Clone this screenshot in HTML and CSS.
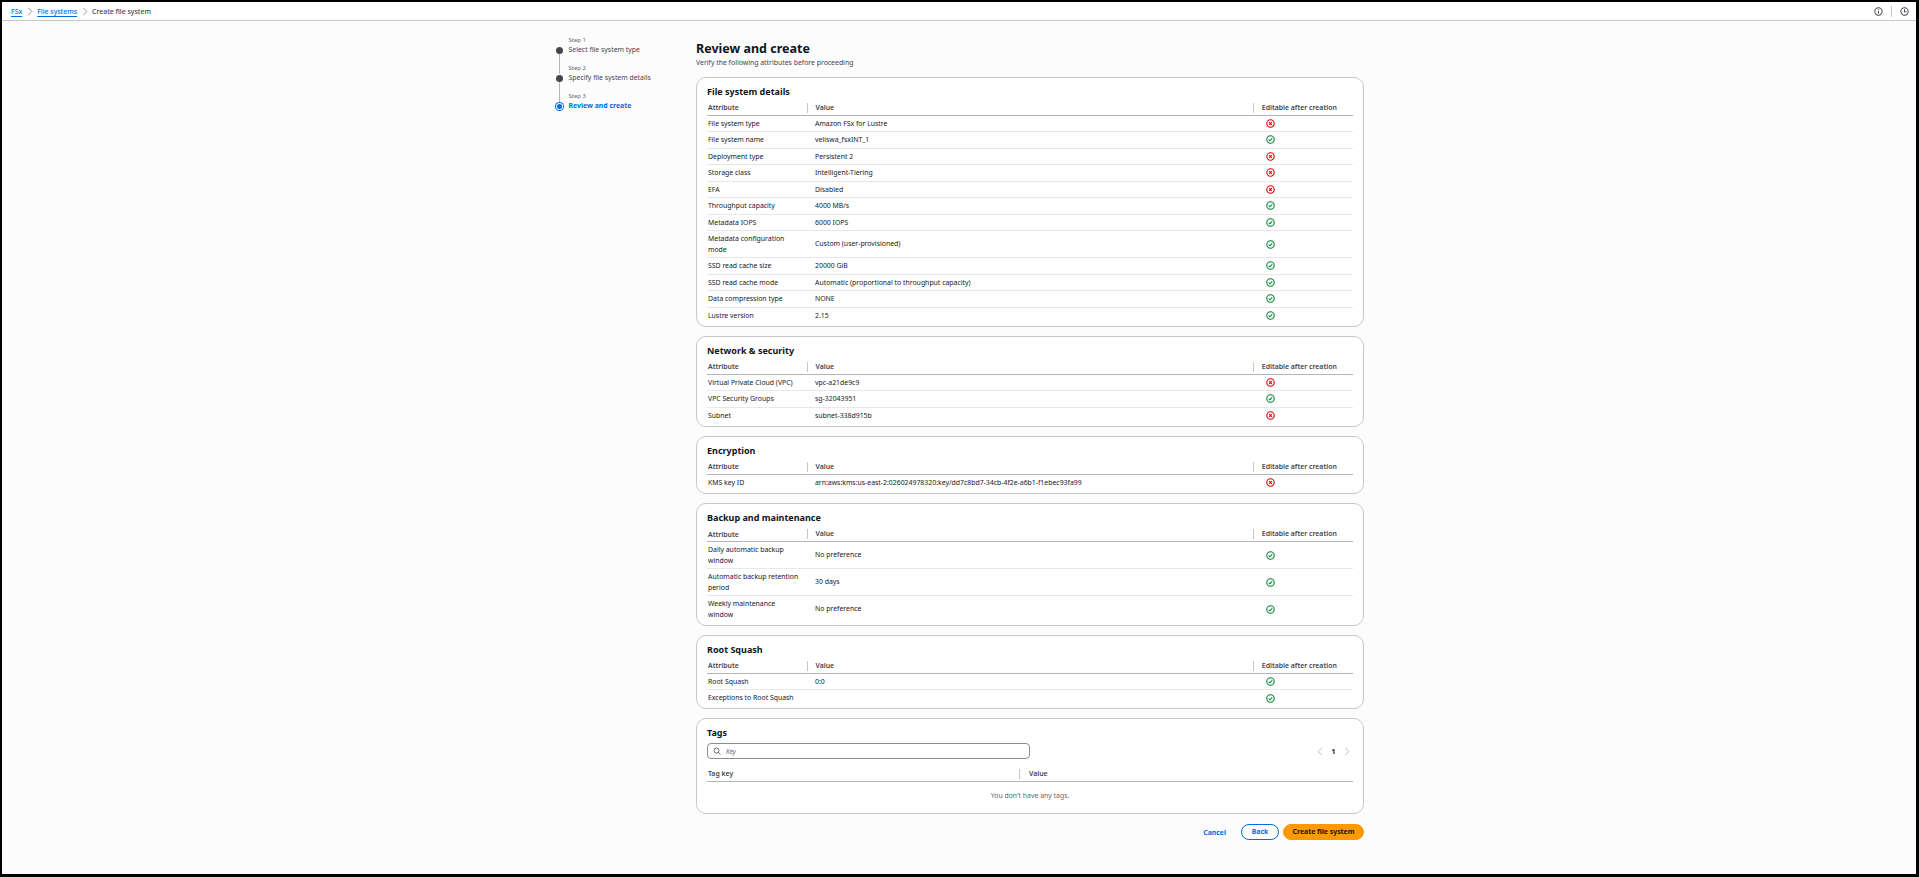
FILE: index.html
```html
<!DOCTYPE html>
<html lang="en">
<head>
<meta charset="utf-8">
<title>Create file system</title>
<link rel="stylesheet" href="styles.css">
</head>
<body>
<svg class="defs" width="0" height="0" aria-hidden="true">
  <symbol id="no" viewBox="0 0 16 16"><circle cx="8" cy="8" r="6.6" fill="none" stroke="#db0000" stroke-width="2"/><path d="M5.7 5.7l4.6 4.6M10.3 5.7l-4.6 4.6" fill="none" stroke="#db0000" stroke-width="2"/></symbol>
  <symbol id="yes" viewBox="0 0 16 16"><circle cx="8" cy="8" r="6.6" fill="none" stroke="#00802f" stroke-width="1.9"/><path d="M4.8 8.2l2.2 2.2 4.2-4.6" fill="none" stroke="#00802f" stroke-width="1.9"/></symbol>
</svg>
<div class="frame">
  <header class="crumbs">
    <nav class="trail">
      <a class="crumb">FSx</a>
      <svg class="sep" viewBox="0 0 8 12"><path d="M1.5 1l5 5-5 5" fill="none" stroke="#8c8c94" stroke-width="1.2"/></svg>
      <a class="crumb">File systems</a>
      <svg class="sep" viewBox="0 0 8 12"><path d="M1.5 1l5 5-5 5" fill="none" stroke="#8c8c94" stroke-width="1.2"/></svg>
      <span class="here">Create file system</span>
    </nav>
    <div class="tools">
      <svg class="tool" viewBox="0 0 16 16"><circle cx="8" cy="8" r="6.5" fill="none" stroke="#424650" stroke-width="1.8"/><path d="M8 7v4.5M8 4.2v1.6" stroke="#424650" stroke-width="1.8"/></svg>
      <span class="rule"></span>
      <svg class="tool" viewBox="0 0 16 16"><circle cx="8" cy="8" r="6.5" fill="none" stroke="#424650" stroke-width="1.8"/><path d="M8 4v4.4h3.4" fill="none" stroke="#424650" stroke-width="1.8"/></svg>
    </div>
  </header>
  <div class="layout">
    <aside class="steps">
      <ol class="steplist">
        <li class="step">
          <small class="steplabel">Step 1</small>
          <div class="stepline"><span class="dot"></span><span class="stepname">Select file system type</span></div>
        </li>
        <li class="step">
          <small class="steplabel">Step 2</small>
          <div class="stepline"><span class="dot"></span><span class="stepname">Specify file system details</span></div>
        </li>
        <li class="step last">
          <small class="steplabel">Step 3</small>
          <div class="stepline"><span class="dot active"></span><span class="stepname current">Review and create</span></div>
        </li>
      </ol>
    </aside>
    <main class="content">
      <h1 class="title">Review and create</h1>
      <p class="sub">Verify the following attributes before proceeding</p>

      <section class="card">
        <h2 class="cardtitle">File system details</h2>
        <table class="attrs">
          <thead><tr><th>Attribute</th><th><span class="th-sep">Value</span></th><th><span class="th-sep">Editable after creation</span></th></tr></thead>
          <tbody>
            <tr><td>File system type</td><td>Amazon FSx for Lustre</td><td><svg class="st"><use href="#no"/></svg></td></tr>
            <tr><td>File system name</td><td>veliswa_fsxINT_1</td><td><svg class="st"><use href="#yes"/></svg></td></tr>
            <tr><td>Deployment type</td><td>Persistent 2</td><td><svg class="st"><use href="#no"/></svg></td></tr>
            <tr><td>Storage class</td><td>Intelligent-Tiering</td><td><svg class="st"><use href="#no"/></svg></td></tr>
            <tr><td>EFA</td><td>Disabled</td><td><svg class="st"><use href="#no"/></svg></td></tr>
            <tr><td>Throughput capacity</td><td>4000 MB/s</td><td><svg class="st"><use href="#yes"/></svg></td></tr>
            <tr><td>Metadata IOPS</td><td>6000 IOPS</td><td><svg class="st"><use href="#yes"/></svg></td></tr>
            <tr><td>Metadata configuration mode</td><td>Custom (user-provisioned)</td><td><svg class="st"><use href="#yes"/></svg></td></tr>
            <tr><td>SSD read cache size</td><td>20000 GiB</td><td><svg class="st"><use href="#yes"/></svg></td></tr>
            <tr><td>SSD read cache mode</td><td>Automatic (proportional to throughput capacity)</td><td><svg class="st"><use href="#yes"/></svg></td></tr>
            <tr><td>Data compression type</td><td>NONE</td><td><svg class="st"><use href="#yes"/></svg></td></tr>
            <tr><td>Lustre version</td><td>2.15</td><td><svg class="st"><use href="#yes"/></svg></td></tr>
          </tbody>
        </table>
      </section>

      <section class="card">
        <h2 class="cardtitle">Network &amp; security</h2>
        <table class="attrs">
          <thead><tr><th>Attribute</th><th><span class="th-sep">Value</span></th><th><span class="th-sep">Editable after creation</span></th></tr></thead>
          <tbody>
            <tr><td>Virtual Private Cloud (VPC)</td><td>vpc-a21de9c9</td><td><svg class="st"><use href="#no"/></svg></td></tr>
            <tr><td>VPC Security Groups</td><td>sg-32043951</td><td><svg class="st"><use href="#yes"/></svg></td></tr>
            <tr><td>Subnet</td><td>subnet-338d915b</td><td><svg class="st"><use href="#no"/></svg></td></tr>
          </tbody>
        </table>
      </section>

      <section class="card">
        <h2 class="cardtitle">Encryption</h2>
        <table class="attrs">
          <thead><tr><th>Attribute</th><th><span class="th-sep">Value</span></th><th><span class="th-sep">Editable after creation</span></th></tr></thead>
          <tbody>
            <tr><td>KMS key ID</td><td>arn:aws:kms:us-east-2:026024978320:key/dd7c8bd7-34cb-4f2e-a6b1-f1ebec93fa99</td><td><svg class="st"><use href="#no"/></svg></td></tr>
          </tbody>
        </table>
      </section>

      <section class="card">
        <h2 class="cardtitle">Backup and maintenance</h2>
        <table class="attrs">
          <thead><tr><th>Attribute</th><th><span class="th-sep">Value</span></th><th><span class="th-sep">Editable after creation</span></th></tr></thead>
          <tbody>
            <tr><td>Daily automatic backup window</td><td>No preference</td><td><svg class="st"><use href="#yes"/></svg></td></tr>
            <tr><td>Automatic backup retention period</td><td>30 days</td><td><svg class="st"><use href="#yes"/></svg></td></tr>
            <tr><td>Weekly maintenance window</td><td>No preference</td><td><svg class="st"><use href="#yes"/></svg></td></tr>
          </tbody>
        </table>
      </section>

      <section class="card">
        <h2 class="cardtitle">Root Squash</h2>
        <table class="attrs">
          <thead><tr><th>Attribute</th><th><span class="th-sep">Value</span></th><th><span class="th-sep">Editable after creation</span></th></tr></thead>
          <tbody>
            <tr><td>Root Squash</td><td>0:0</td><td><svg class="st"><use href="#yes"/></svg></td></tr>
            <tr><td>Exceptions to Root Squash</td><td></td><td><svg class="st"><use href="#yes"/></svg></td></tr>
          </tbody>
        </table>
      </section>

      <section class="card tags">
        <h2 class="cardtitle tagstitle">Tags</h2>
        <div class="filterbar">
          <label class="search">
            <svg class="searchicon" viewBox="0 0 16 16"><circle cx="7" cy="7" r="5" fill="none" stroke="#424650" stroke-width="1.6"/><path d="M10.6 10.6L15 15" stroke="#424650" stroke-width="1.6"/></svg>
            <span class="placeholder">Key</span>
          </label>
          <div class="pager">
            <svg class="pagearrow" viewBox="0 0 8 12"><path d="M6.5 1l-5 5 5 5" fill="none" stroke="#b4b4bb" stroke-width="1.2"/></svg>
            <span class="pagenum">1</span>
            <svg class="pagearrow" viewBox="0 0 8 12"><path d="M1.5 1l5 5-5 5" fill="none" stroke="#b4b4bb" stroke-width="1.2"/></svg>
          </div>
        </div>
        <div class="taghead"><span class="tagkey">Tag key</span><span class="tagval">Value</span></div>
        <p class="empty">You don't have any tags.</p>
      </section>

      <footer class="actions">
        <a class="cancel">Cancel</a>
        <button class="btn back">Back</button>
        <button class="btn primary">Create file system</button>
      </footer>
    </main>
  </div>
</div>
</body>
</html>
```
FILE: styles.css
```css
* { box-sizing: border-box; }
html, body { margin: 0; height: 100%; }
body {
  background: #000;
  padding: 2px 3px 3px 2px;
  font-family: "Noto Sans", "Open Sans", sans-serif;
  font-size: 6.9px;
  color: #0f141a;
  overflow: hidden;
}
.defs { position: absolute; }
.frame { height: 100%; background: #fcfcfd; overflow: hidden; }
.crumbs {
  height: 19px;
  border-bottom: 1px solid #c6c6cd;
  background: #fff;
  display: flex;
  align-items: center;
  justify-content: space-between;
  padding: 0 7px 0 9px;
}
.trail { display: flex; align-items: center; gap: 4.5px; }
.crumb { color: #006ce0; text-decoration: underline; text-underline-offset: 1.5px; font-weight: 500; }
.here { color: #424650; font-weight: 500; }
.sep { width: 6px; height: 9px; }
.tools { display: flex; align-items: center; gap: 8px; }
.tool { width: 9px; height: 9px; }
.rule { width: 1px; height: 11px; background: #c6c6cd; }
.layout { display: flex; padding-left: 554px; }
.steps { width: 140px; padding-top: 14px; }
.steplist { list-style: none; margin: 0; padding: 0; }
.step { height: 28px; position: relative; }
.step::before { content: ""; position: absolute; left: 3px; top: 19px; bottom: -11px; width: 1px; background: #b4b4bb; }
.step.last::before { display: none; }
.steplabel { display: block; font-size: 6px; line-height: 10px; color: #656871; margin-left: 12.5px; }
.stepline { display: flex; align-items: center; gap: 5.5px; line-height: 10px; color: #424650; }
.dot { width: 7px; height: 7px; border-radius: 50%; background: #424650; flex: none; }
.dot.active { width: 5px; height: 5px; margin: 0 1px; background: #006ce0; box-shadow: 0 0 0 1px #fff, 0 0 0 2px #006ce0; }
.current { color: #006ce0; font-weight: 700; }
.content { width: 668px; padding-top: 20px; }
.title { margin: 0; font-size: 12.5px; line-height: 16px; font-weight: 700; }
.sub { margin: 0 0 8.5px; line-height: 11px; color: #424650; }
.card {
  background: #fff;
  border: 1px solid #c6c6cd;
  border-radius: 10px;
  padding: 7px 10px 1.5px;
  margin-bottom: 9.2px;
}
.cardtitle { margin: 0 0 2px; font-size: 9px; line-height: 14px; font-weight: 700; }
.attrs, .attrs thead, .attrs tbody { display: block; width: 100%; }
.attrs tr { display: grid; grid-template-columns: 107px 446.3px 1fr; }
.attrs th { text-align: left; font-weight: 600; color: #424650; height: 15px; padding: 0 1px; border-bottom: 1px solid #b4b4bb; display: flex; align-items: center; }
.th-sep { display: block; border-left: 1px solid #c6c6cd; padding-left: 8px; line-height: 10px; margin-left: -8.5px; }
.attrs td { padding: 3px 14px 2px 1px; line-height: 10.5px; color: #16191f; min-height: 16.5px; border-bottom: 1px solid #e8e8ec; display: flex; align-items: center; }
.attrs td:nth-child(2) { padding-right: 1px; }
.attrs tr:last-child td { border-bottom-color: transparent; }
.attrs td:last-child { padding: 2.5px 1px 2.5px 6px; }
.st { display: block; width: 9px; height: 9px; }
.tags { padding-bottom: 12px; margin-bottom: 10.5px; }
.tagstitle { margin-bottom: 3px; }
.filterbar { display: flex; align-items: center; justify-content: space-between; }
.search {
  width: 323px; height: 15.5px;
  border: 1px solid #8c8c94; border-radius: 4px;
  display: flex; align-items: center; gap: 5px; padding-left: 5px; background: #fff;
}
.searchicon { width: 8px; height: 8px; }
.placeholder { font-style: italic; color: #656871; font-size: 6.5px; }
.pager { display: flex; align-items: center; gap: 8.5px; padding-right: 3px; font-weight: 700; }
.pagearrow { width: 6px; height: 9px; }
.taghead { display: flex; margin-top: 8px; height: 15px; align-items: center; border-bottom: 1px solid #b4b4bb; font-weight: 600; color: #424650; padding-left: 1px; }
.tagkey { width: 311px; }
.tagval { border-left: 1px solid #c6c6cd; padding-left: 9px; line-height: 10px; }
.empty { margin: 8px 0 0; text-align: center; color: #656871; line-height: 11px; }
.actions { display: flex; justify-content: flex-end; align-items: center; gap: 4px; }
.cancel { color: #006ce0; font-weight: 700; margin-right: 11px; }
.btn { font: 700 6.9px/1 "Noto Sans", "Open Sans", sans-serif; height: 16px; border-radius: 8px; border: 1px solid #006ce0; background: #fff; color: #006ce0; padding: 0; }
.btn.back { width: 38px; }
.btn.primary { background: #ff9900; border-color: #ff9900; color: #0f141a; width: 81px; }
```
